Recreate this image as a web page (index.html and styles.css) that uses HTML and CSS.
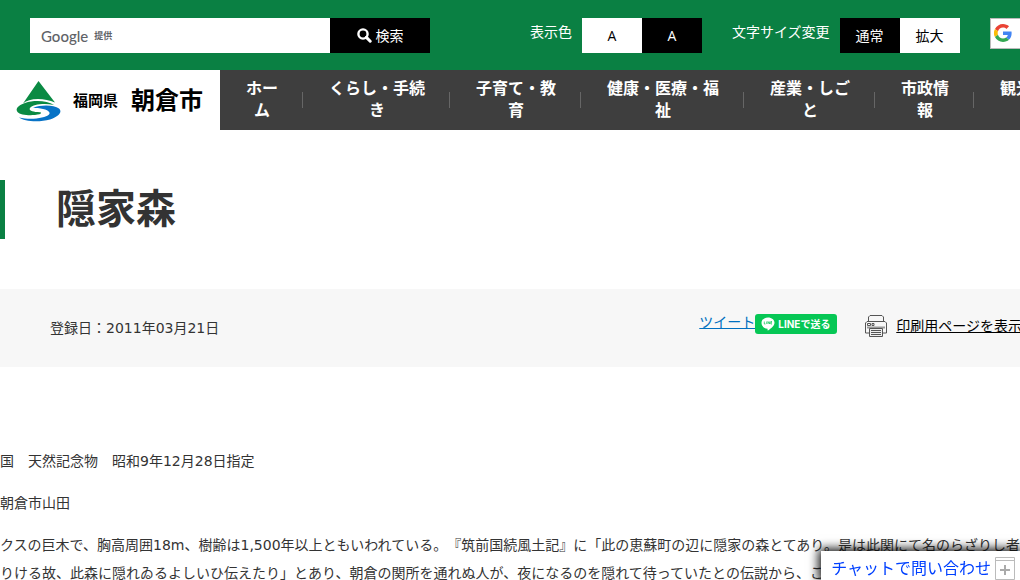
FILE: index.html
```
<!DOCTYPE html>
<html lang="ja">
<head>
<meta charset="utf-8">
<title>隠家森 - 朝倉市</title>
<link rel="stylesheet" href="styles.css">
</head>
<body>
<div class="page">
  <header>
    <div class="tools">
      <form class="search">
        <div class="search-box">
          <label class="search-label" for="q"><span class="brand">Google</span> 提供</label>
          <input class="search-input" id="q" type="text">
        </div>
        <button class="search-button" type="button">
          <svg width="15" height="15" viewBox="0 0 15 15" fill="none" stroke="#fff" aria-hidden="true"><circle cx="6" cy="6" r="4.6" stroke-width="2.4"/><path d="M9.4 9.4 13.2 13.2" stroke-width="3" stroke-linecap="round"/></svg>
          検索
        </button>
      </form>
      <div class="option">
        <span class="option-label">表示色</span>
        <button class="option-button light" type="button">A</button>
        <button class="option-button" type="button">A</button>
      </div>
      <div class="option">
        <span class="option-label">文字サイズ変更</span>
        <button class="option-button" type="button">通常</button>
        <button class="option-button light" type="button">拡大</button>
      </div>
      <button class="translate" type="button" aria-label="Google">
        <svg width="18" height="18" viewBox="0 0 48 48" aria-hidden="true"><path fill="#ea4335" d="M24 9.5c3.5 0 6.7 1.2 9.2 3.6l6.9-6.9C35.9 2.4 30.5 0 24 0 14.6 0 6.5 5.4 2.6 13.2l8 6.2C12.4 13.7 17.7 9.5 24 9.5z"/><path fill="#4285f4" d="M47 24.6c0-1.600-.2-3.100-.4-4.600H24v9h12.900c-.6 3-2.300 5.500-4.800 7.200l7.700 6C44.400 38 47 31.800 47 24.600z"/><path fill="#fbbc05" d="M10.500 28.600a14.500 14.500 0 0 1 0-9.200l-8-6.200a24 24 0 0 0 0 21.600z"/><path fill="#34a853" d="M24 48c6.500 0 11.900-2.100 15.900-5.800l-7.700-6c-2.200 1.500-4.900 2.300-8.200 2.300-6.300 0-11.600-4.200-13.500-9.900l-8 6.200C6.500 42.600 14.600 48 24 48z"/></svg>
      </button>
    </div>
    <div class="bar">
      <a class="logo" href="#">
        <svg class="mark" width="46" height="41" viewBox="0 0 46 41" aria-hidden="true">
          <path fill="#0a8a43" d="M22.500 0 39 21.500Q31 18 22 18 12 18 7 22.500z"/>
          <path fill="#0a8a43" d="M38 24C31 19.500 18 19 9 22 2 24.500-1 28 1.500 31 4 34 12 34.500 19 34 24 33.500 27 32 24 31.300 16 31 12.500 29.500 14 27 17 23 29 22 38 24z"/>
          <path fill="#0873c6" d="M17 27C25 23.500 38 24 43 27.500 47 31 42 36 34 38.500 23 41.500 8 40.500 3 36.500 14 39 29 37.500 33 33.500 36 30 27 26.500 17 27z"/>
        </svg>
        <span class="pref">福岡県</span>
        <span class="city">朝倉市</span>
      </a>
      <nav class="nav">
        <a href="#">ホー<br>ム</a>
        <a href="#">くらし・手続<br>き</a>
        <a href="#">子育て・教<br>育</a>
        <a href="#">健康・医療・福<br>祉</a>
        <a href="#">産業・しご<br>と</a>
        <a href="#">市政情<br>報</a>
        <a href="#">観光・文<br>化</a>
      </nav>
    </div>
  </header>
  <main>
    <h1>隠家森</h1>
    <div class="info">
      <span>登録日：2011年03月21日</span>
      <div class="share">
        <a class="tweet" href="#">ツイート</a>
        <a class="line" href="#">
          <svg width="14" height="14" viewBox="0 0 14 14" aria-hidden="true"><path fill="#fff" d="M7 .5c3.700 0 6.500 2.300 6.500 5.300 0 3-3.500 5.600-6.500 7.700-.4.200-.6-.2-.4-1.700C3 11.500.5 9 .5 5.800.5 2.800 3.300.5 7 .5z"/><path d="M3.300 4.500v2.500h1.200M5.700 4.500v2.500M7 7V4.500l1.600 2.500V4.500M11 4.500H9.800V7H11M9.800 5.700H11" stroke="#06c755" stroke-width=".7" fill="none"/></svg>
          LINEで送る
        </a>
        <a class="print" href="#">
          <svg width="22" height="22" viewBox="0 0 22 22" fill="none" stroke="#555" aria-hidden="true"><path d="M3.500 7V2L5 .5h12L18.500 2v5"/><path d="M4 18H.5V8L2 6.500h18L21.500 8v10H18"/><path d="M2.500 8.500h3v2h-3zM7 8.500h2v2H7z"/><path d="M2 12.500h18" stroke="#999" stroke-width="2"/><path d="M4.500 13.500h13v8h-13z" fill="#eee"/><path d="M6 15.500h10M6 17.500h10M6 19.500h10"/></svg>
          <span>印刷用ページを表示する</span>
        </a>
      </div>
    </div>
    <div class="article">
      <p>国　天然記念物　昭和9年12月28日指定</p>
      <p>朝倉市山田</p>
      <p>クスの巨木で、胸高周囲18m、樹齢は1,500年以上ともいわれている。『筑前国続風土記』に「此の恵蘇町の辺に隠家の森とてあり。是は此関にて名のらざりし者<br>りける故、此森に隠れゐるよしいひ伝えたり」とあり、朝倉の関所を通れぬ人が、夜になるのを隠れて待っていたとの伝説から、この名がある。</p>
    </div>
  </main>
</div>
<button class="chat" type="button">
  チャットで問い合わせ
  <svg width="20" height="23" viewBox="0 0 20 23" fill="none" stroke="#bbb" aria-hidden="true"><path d="M.5.500h19v22H.5zM.5 3.500h19"/><path d="M10 8v10M5 13h10" stroke="#aaa" stroke-width="2"/></svg>
</button>
</body>
</html>
```
FILE: styles.css
```
* { box-sizing: border-box; }
html, body { height: 100%; }
body {
  margin: 0;
  overflow: hidden;
  background: #fff;
  color: #333;
  font: 14px/28px "DejaVu Sans", "Noto Sans CJK JP", sans-serif;
  text-spacing-trim: space-all;
}
button, input { font: inherit; border: 0; border-radius: 0; padding: 0; }
svg { display: block; flex: none; }
.page { min-width: 1100px; }

.tools {
  display: flex;
  align-items: flex-start;
  gap: 30px;
  height: 70px;
  padding: 18px 30px;
  background: #0a8043;
}
.search { display: flex; flex: none; width: 400px; height: 35px; margin-right: 70px; }
.search-box { display: flex; flex: 1; align-items: center; padding-left: 11px; background: #fff; }
.search-label {
  display: flex;
  align-items: center;
  gap: 6px;
  color: #5f6368;
  font-size: 9px;
  font-weight: 700;
}
.brand { font: 500 15px/20px Lato, sans-serif; }
.search-input { flex: 1; min-width: 0; height: 35px; background: transparent; outline: 0; }
.search-button {
  display: flex;
  align-items: center;
  justify-content: center;
  gap: 4px;
  width: 100px;
  background: #000;
  color: #fff;
}
.option { display: flex; flex: none; color: #fff; }
.option-label { margin-right: 10px; white-space: nowrap; }
.option-button {
  width: 60px;
  height: 35px;
  background: #000;
  color: #fff;
  font-family: "Open Sans", "Noto Sans CJK JP", sans-serif;
}
.option-button.light { background: #fff; color: #000; }
.translate {
  flex: none;
  width: 80px;
  height: 31px;
  padding: 0 0 2px 3px;
  border: 1px solid #bbb;
  background: #fff;
}

.bar { display: flex; height: 60px; background: #3e3e3e; }
.logo {
  display: flex;
  flex: none;
  align-items: center;
  width: 220px;
  padding: 2px 0 0 16px;
  background: #fff;
  color: #000;
  font-weight: 600;
  text-decoration: none;
  white-space: nowrap;
}
.mark { margin-right: 11px; }
.pref { margin-right: 13px; font-size: 15px; }
.city { font-size: 24px; }
.nav { display: flex; align-items: center; }
.nav a {
  padding: 0 25px 0 26px;
  color: #fff;
  font-size: 16px;
  font-weight: 700;
  line-height: 22px;
  text-align: center;
  text-decoration: none;
  white-space: nowrap;
  background: linear-gradient(#666, #666) right center / 1px 16px no-repeat;
}

h1 {
  margin: 50px 0;
  padding-left: 51px;
  border-left: 5px solid #0a8043;
  font-size: 40px;
  line-height: 59px;
}
.info {
  display: flex;
  align-items: center;
  justify-content: space-between;
  height: 78px;
  padding: 0 50px;
  background: #f7f7f7;
}
.share { display: flex; align-items: flex-start; height: 28px; white-space: nowrap; }
.tweet { color: #0070c0; line-height: 16px; }
.line {
  display: flex;
  align-items: center;
  gap: 3px;
  width: 82px;
  height: 20px;
  margin-right: 28px;
  padding-left: 6px;
  border-radius: 3px;
  background: #06c755;
  color: #fff;
  font-family: Inter, "Noto Sans CJK JP", sans-serif;
  font-size: 10px;
  font-weight: 700;
  text-decoration: none;
}
.print { display: flex; align-items: center; gap: 9px; height: 24px; color: #000; }
.article { padding-top: 80px; }
.article p { margin: 0 0 14px; white-space: nowrap; }

.chat {
  position: fixed;
  right: 0;
  bottom: 0;
  display: flex;
  align-items: center;
  gap: 4px;
  height: 29px;
  padding: 6px 5px 0 10px;
  background: #fff;
  box-shadow: 0 0 10px 2px #000;
  color: #0040ff;
  font-size: 16px;
  white-space: nowrap;
}
```
